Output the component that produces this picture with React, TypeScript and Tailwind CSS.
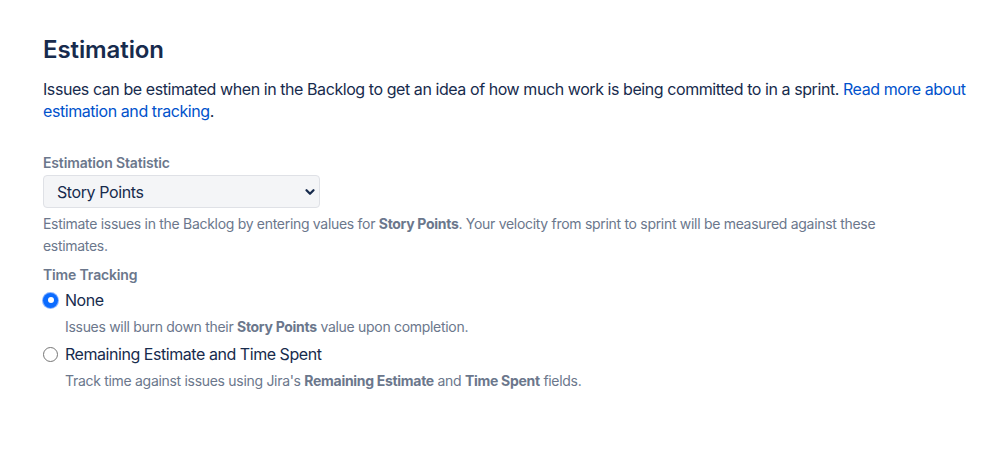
import { useState } from 'react';

function Radio({ checked, onChange }: { checked: boolean; onChange: () => void }) {
  return (
    <button
      type="button"
      onClick={onChange}
      className={`w-[15px] h-[15px] rounded-full flex items-center justify-center shrink-0 ${
        checked ? 'bg-[#0B6BFF] border-0 ring-1 ring-[#8AB4FF]' : 'bg-white border border-[#767676]'
      }`}
    >
      {checked && <span className="w-[6px] h-[6px] rounded-full bg-white" />}
    </button>
  );
}

export default function App() {
  const [tracking, setTracking] = useState('none');

  return (
    <div className="bg-white min-h-[458px] pl-[43px] pr-[26px] pt-[33px] text-[#172B4D] font-['Inter','Liberation_Sans',sans-serif]">
      <h1 className="text-[24px] font-semibold leading-[34px] tracking-[-0.1px]">Estimation</h1>
      <p className="mt-[11px] text-[16px] leading-[22px] tracking-[-0.43px]">
        Issues can be estimated when in the Backlog to get an idea of how much work is being committed to in a
        sprint.{' '}
        <a href="#" className="text-[#0052CC]">
          Read more about estimation and tracking
        </a>
        .
      </p>

      {/* Estimation statistic */}
      <div className="mt-[32px]">
        <label className="block text-[14px] font-semibold leading-[18px] text-[#6B778C] tracking-[-0.15px]">
          Estimation Statistic
        </label>
        <div className="mt-[3px] w-[277px] h-[33px] bg-[#F4F5F7] border border-[#DFE1E6] rounded-[4px] flex items-center justify-between pl-[13px] pr-[2px]">
          <span className="text-[16px] tracking-[-0.4px]">Story Points</span>
          <svg width="14" height="14" viewBox="0 0 16 16" fill="none" stroke="#172B4D" strokeWidth="2.6" strokeLinecap="round" strokeLinejoin="round">
            <path d="M4 6l4 4 4-4" />
          </svg>
        </div>
        <p className="mt-[5px] max-w-[850px] text-[14px] leading-[22px] text-[#6B778C] tracking-[-0.3px]">
          Estimate issues in the Backlog by entering values for <b className="font-bold">Story Points</b>. Your velocity
          from sprint to sprint will be measured against these estimates.
        </p>
      </div>

      {/* Time tracking */}
      <div className="mt-[9px]">
        <label className="block text-[14px] font-semibold leading-[18px] text-[#6B778C] tracking-[-0.15px]">
          Time Tracking
        </label>
        <div className="mt-[4px] flex items-center gap-[7px] h-[24px]">
          <Radio checked={tracking === 'none'} onChange={() => setTracking('none')} />
          <span className="text-[16px] tracking-[-0.45px]">None</span>
        </div>
        <p className="ml-[22px] mt-[4px] text-[14px] leading-[22px] text-[#6B778C] tracking-[-0.3px]">
          Issues will burn down their <b className="font-bold">Story Points</b> value upon completion.
        </p>
        <div className="mt-[4px] flex items-center gap-[7px] h-[24px]">
          <Radio checked={tracking === 'remaining'} onChange={() => setTracking('remaining')} />
          <span className="text-[16px] tracking-[-0.45px]">Remaining Estimate and Time Spent</span>
        </div>
        <p className="ml-[22px] mt-[4px] text-[14px] leading-[22px] text-[#6B778C] tracking-[-0.3px]">
          Track time against issues using Jira's <b className="font-bold">Remaining Estimate</b> and{' '}
          <b className="font-bold">Time Spent</b> fields.
        </p>
      </div>
    </div>
  );
}
